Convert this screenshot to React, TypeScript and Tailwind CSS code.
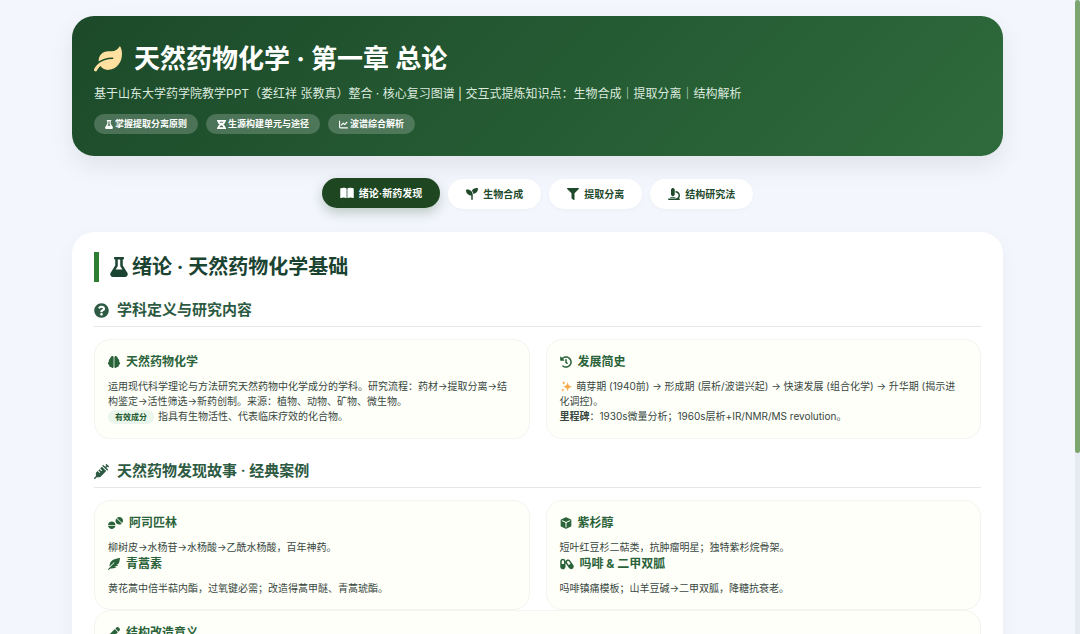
import type { ReactNode } from "react";
import { FaLeaf, FaFlask, FaQuestionCircle, FaHistory, FaFeatherAlt, FaFilter } from "react-icons/fa";
import {
  FaChartLine, FaBookOpen, FaSeedling, FaMicroscope, FaBrain, FaSyringe, FaTablets, FaCapsules, FaPen,
} from "react-icons/fa6";

function HourglassIcon() {
  return (
    <svg width="1em" height="1em" viewBox="0 0 18 18" fill="currentColor" aria-hidden="true">
      <path d="M0 0h18v3h-1.500c0 2.500-1.500 4.500-4 6 2.500 1.500 4 3.500 4 6H18v3H0v-3h1.500c0-2.500 1.500-4.500 4-6C3 7.500 1.500 5.500 1.500 3H0z M5 3.500c.3 1 .7 1.500 1.300 2h5.400c.6-.5 1-1 1.300-2z M5 14.500h8c-.5-1.800-2-3-4-4-2 1-3.500 2.200-4 4z" fillRule="evenodd" />
    </svg>
  );
}

function CubeIcon() {
  return (
    <svg width="1em" height="1em" viewBox="0 0 24 24" aria-hidden="true">
      <path d="M12 1.800 21.500 6v12L12 22.200 2.500 18V6z" fill="currentColor" stroke="currentColor" strokeWidth="2.400" strokeLinejoin="round" />
      <path d="M4.500 7.500 12 11l7.500-3.500M12 11v9" fill="none" stroke="#fffffa" strokeWidth="2" strokeLinecap="round" />
    </svg>
  );
}

function SparklesIcon() {
  return (
    <svg width="11" height="11" viewBox="0 0 20 20" fill="#f7a94c" className="mr-[2px] ml-px inline-block align-[-2px]" aria-hidden="true">
      <path d="M12 2c1 5.500 2.500 7 8 8.500-5.500 1.500-7 3-8 8.500-1-5.500-2.500-7-8-8.500 5.500-1.500 7-3 8-8.500z" />
      <path d="M5 0c.5 2.300 1.200 3 3.500 3.500C6.200 4 5.500 4.700 5 7c-.5-2.300-1.200-3-3.500-3.500C3.800 3 4.500 2.300 5 0z" />
      <path d="M3.500 13c.5 2.300 1.200 3 3.500 3.500-2.300.5-3 1.200-3.500 3.500-.5-2.300-1.200-3-3.500-3.500C2.300 16 3 15.300 3.500 13z" />
    </svg>
  );
}

const badges = [
  { icon: <FaFlask className="w-2" />, label: "掌握提取分离原则" },
  { icon: <HourglassIcon />, label: "生源构建单元与途径" },
  { icon: <FaChartLine />, label: "波谱综合解析" },
];

const tabs = [
  { icon: <FaBookOpen className="w-[14px]" />, label: "绪论·新药发现", active: true },
  { icon: <FaSeedling />, label: "生物合成", active: false },
  { icon: <FaFilter />, label: "提取分离", active: false },
  { icon: <FaMicroscope />, label: "结构研究法", active: false },
];

function SectionTitle({ icon, children }: { icon: ReactNode; children: ReactNode }) {
  return (
    <h3 className="mb-3 flex items-center gap-2 border-b border-[#e3e8e6] pb-1 text-[15px] leading-6 font-semibold text-[#2d5a42]">
      {icon}
      {children}
    </h3>
  );
}

function Card({ children, className = "" }: { children: ReactNode; className?: string }) {
  return (
    <article className={`rounded-[16px] border border-[#f3f5f0] bg-[#fffffa] py-[13px] pr-4 pl-[13px] ${className}`}>
      {children}
    </article>
  );
}

function CardTitle({ icon, children }: { icon: ReactNode; children: ReactNode }) {
  return (
    <h4 className="mb-2 flex items-center gap-[6px] text-[12px] leading-[18px] font-bold text-[#2a6339]">
      {icon}
      {children}
    </h4>
  );
}

function Text({ children }: { children: ReactNode }) {
  return <p className="text-[10px] leading-[15px] text-[#374740]">{children}</p>;
}

export default function App() {
  return (
    <div className="min-h-screen bg-[#f3f6fd] pr-[5px] font-['Inter','Noto_Sans_CJK_SC',sans-serif]">
      <div className="fixed inset-y-0 right-0 w-[5px] bg-[#e6eaf2]" aria-hidden="true">
        <div className="h-[71.5%] rounded-full bg-[#7da56f]" />
      </div>
      <div className="mx-auto max-w-[963px] px-4 pt-4 pb-[120px]">
        <header className="mb-[21px] rounded-[22px] bg-linear-135 from-[#1c4a2a] to-[#2e6b3c] px-[22px] pt-[25px] pb-[22px] shadow-[0_10px_24px_rgba(0,0,0,0.08)]">
          <h1 className="flex items-center gap-3 text-[26px] leading-9 font-bold text-white">
            <FaLeaf className="size-7 text-[#ffe0a0]" />
            天然药物化学 · 第一章 总论
          </h1>
          <p className="mt-[6px] text-[12px] leading-[22px] text-[#dceadf]">
            基于山东大学药学院教学PPT（娄红祥 张教真）整合 · 核心复习图谱 | 交互式提炼知识点：生物合成｜提取分离｜结构解析
          </p>
          <ul className="mt-[9px] flex flex-wrap gap-2">
            {badges.map((b) => (
              <li key={b.label} className="flex h-5 items-center gap-[2px] rounded-full bg-white/20 px-[11px] text-[9px] font-semibold text-white">
                {b.icon}
                {b.label}
              </li>
            ))}
          </ul>
        </header>

        <nav className="mb-[23px] flex flex-wrap justify-center gap-2">
          {tabs.map((t) => (
            <button
              key={t.label}
              type="button"
              className={
                t.active
                  ? "my-px flex h-[30px] items-center gap-[5px] rounded-full bg-[#1e4620] px-[18px] text-[10px] font-bold text-white shadow-[0_5px_12px_rgba(30,70,32,0.25)]"
                  : "mt-[2px] flex h-[30px] items-center gap-[5px] rounded-full bg-white px-[18px] text-[10px] font-bold text-[#1e4a2b] shadow-[0_1px_4px_rgba(0,0,0,0.03)]"
              }
            >
              <span className="text-[12px]">{t.icon}</span>
              {t.label}
            </button>
          ))}
        </nav>

        <main className="rounded-[22px] bg-white px-[22px] pt-5 pb-6 shadow-[0_6px_20px_rgba(0,0,0,0.04)]">
          <h2 className="mb-4 flex items-center gap-1 border-l-[5px] border-[#2e7d32] pl-[11px] text-[20px] leading-[30px] font-bold text-[#1b4332]">
            <FaFlask className="w-[18px]" />
            绪论 · 天然药物化学基础
          </h2>

          <section className="mb-5">
            <SectionTitle icon={<FaQuestionCircle />}>学科定义与研究内容</SectionTitle>
            <div className="grid grid-cols-2 gap-4">
              <Card>
                <CardTitle icon={<FaBrain />}>天然药物化学</CardTitle>
                <Text>
                  运用现代科学理论与方法研究天然药物中化学成分的学科。研究流程：药材→提取分离→结构鉴定→活性筛选→新药创制。来源：植物、动物、矿物、微生物。
                  <br />
                  <span className="mr-1 rounded-full bg-[#eaf5eb] px-[7px] py-[2px] text-[8px] font-bold text-[#1e5a30]">有效成分</span>
                  指具有生物活性、代表临床疗效的化合物。
                </Text>
              </Card>
              <Card>
                <CardTitle icon={<FaHistory />}>发展简史</CardTitle>
                <Text>
                  <SparklesIcon /> 萌芽期 (1940前) → 形成期 (层析/波谱兴起) → 快速发展 (组合化学) → 升华期 (揭示进化调控)。
                  <br />
                  <strong>里程碑</strong>：1930s微量分析；1960s层析+IR/NMR/MS revolution。
                </Text>
              </Card>
            </div>
          </section>

          <section>
            <SectionTitle icon={<FaSyringe />}>天然药物发现故事 · 经典案例</SectionTitle>
            <div className="grid grid-cols-2 gap-x-4">
              <Card>
                <CardTitle icon={<FaTablets className="w-[15px]" />}>阿司匹林</CardTitle>
                <Text>柳树皮→水杨苷→水杨酸→乙酰水杨酸，百年神药。</Text>
                <CardTitle icon={<FaFeatherAlt />}>青蒿素</CardTitle>
                <Text>黄花蒿中倍半萜内酯，过氧键必需；改造得蒿甲醚、青蒿琥酯。</Text>
              </Card>
              <Card>
                <CardTitle icon={<CubeIcon />}>紫杉醇</CardTitle>
                <Text>短叶红豆杉二萜类，抗肿瘤明星；独特紫杉烷骨架。</Text>
                <CardTitle icon={<FaCapsules className="w-[14px]" />}>吗啡 &amp; 二甲双胍</CardTitle>
                <Text>吗啡镇痛模板；山羊豆碱→二甲双胍，降糖抗衰老。</Text>
              </Card>
              <Card className="col-span-2">
                <CardTitle icon={<FaPen />}>结构改造意义</CardTitle>
              </Card>
            </div>
          </section>
        </main>
      </div>
    </div>
  );
}
